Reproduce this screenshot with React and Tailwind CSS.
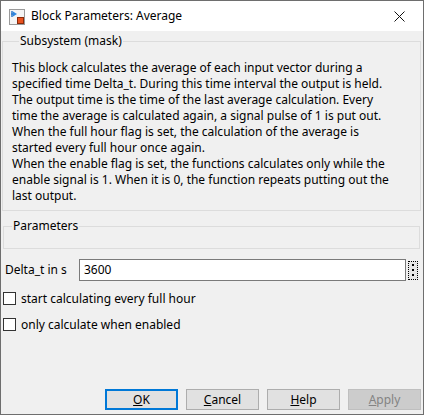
import React from 'react';

const lines = [
  'This block calculates the average of each input vector during a',
  'specified time Delta_t. During this time interval the output is held.',
  'The output time is the time of the last average calculation. Every',
  'time the average is calculated again, a signal pulse of 1 is put out.',
  'When the full hour flag is set, the calculation of the average is',
  'started every full hour once again.',
  'When the enable flag is set, the functions calculates only while the',
  'enable signal is 1. When it is 0, the function repeats putting out the',
  'last output.',
];

function BlockIcon() {
  return (
    <svg width="16" height="16" viewBox="0 0 16 16">
      <rect x="0.5" y="0.5" width="15" height="15" fill="#f4f4f4" stroke="#9a9a9a" />
      <path d="M3 2 L3 8" stroke="#1e6fc8" strokeWidth="1.4" />
      <path d="M4 2.5 L8 5 L4 7.5 Z" fill="#2f86de" />
      <path d="M2 5 L4 5" stroke="#1e6fc8" strokeWidth="1" />
      <rect x="8.5" y="8.5" width="6" height="6" fill="#e8521f" stroke="#8a2a0a" />
    </svg>
  );
}

function Checkbox({ label }) {
  return (
    <div className="flex items-center h-[13px]">
      <span className="w-[13px] h-[13px] border border-[#333333] bg-white" />
      <span className="ml-[5px] leading-[16px]">{label}</span>
    </div>
  );
}

function DialogButton({ children, primary, disabled }) {
  return (
    <button
      className={
        primary
          ? 'w-[73px] h-[21px] bg-[#e1e1e1] border-2 border-[#0078d7] text-black'
          : disabled
          ? 'w-[73px] h-[21px] bg-[#cccccc] border border-[#bfbfbf] text-[#838383]'
          : 'w-[73px] h-[21px] bg-[#e1e1e1] border border-[#adadad] text-black'
      }
    >
      {children}
    </button>
  );
}

export default function App() {
  return (
    <div
      className="w-[424px] h-[415px] border border-[#6e6e6e] bg-[#f0f0f0] flex flex-col text-[12px] text-black overflow-hidden"
      style={{ fontFamily: '"Noto Sans", "Open Sans", sans-serif' }}
    >
      {/* Title bar */}
      <div className="h-[30px] bg-white flex items-center shrink-0">
        <div className="ml-[8px] mt-[1px]">
          <BlockIcon />
        </div>
        <span className="ml-[6px] leading-[16px]">Block Parameters: Average</span>
        <svg className="ml-auto mr-[18px]" width="11" height="11" viewBox="0 0 11 11">
          <path d="M0.5 0.5 L10.5 10.5 M10.5 0.5 L0.5 10.5" stroke="#111" strokeWidth="1" />
        </svg>
      </div>

      {/* Description group */}
      <fieldset className="mt-[2px] ml-[1px] mr-[2px] border border-[#dcdcdc] pl-[9px] pr-[4px] pt-[11px] pb-[6px]">
        <legend className="ml-[7px] px-[1px] leading-[16px]">Subsystem (mask)</legend>
        <div className="leading-[16px] whitespace-nowrap">
          {lines.map((l, i) => (
            <div key={i}>{l}</div>
          ))}
        </div>
      </fieldset>

      {/* Parameters group */}
      <fieldset className="mt-[7px] ml-[2px] mr-[3px] border border-[#dcdcdc] pb-[14px]">
        <legend className="ml-[8px] px-[1px] leading-[16px]">Parameters</legend>
      </fieldset>

      <div className="flex items-center mt-[10px] pl-[4px]">
        <span className="w-[74px] leading-[16px]">Delta_t in s</span>
        <div className="w-[327px] h-[22px] border border-[#7a7a7a] bg-white flex items-center pl-[4px]">
          3600
        </div>
        <div className="ml-[2px] w-[10px] h-[19px] border border-dotted border-black bg-[#e6e6e6] flex flex-col items-center justify-center gap-[3px]">
          <span className="w-[2px] h-[2px] bg-black" />
          <span className="w-[2px] h-[2px] bg-black" />
          <span className="w-[2px] h-[2px] bg-black" />
        </div>
      </div>

      <div className="mt-[11px] pl-[2px] flex flex-col gap-[13px]">
        <Checkbox label="start calculating every full hour" />
        <Checkbox label="only calculate when enabled" />
      </div>

      <div className="mt-auto mb-[4px] flex justify-end gap-[8px] pr-[2px]">
        <DialogButton primary>
          <u>O</u>K
        </DialogButton>
        <DialogButton>
          <u>C</u>ancel
        </DialogButton>
        <DialogButton>
          <u>H</u>elp
        </DialogButton>
        <DialogButton disabled>
          <u>A</u>pply
        </DialogButton>
      </div>
    </div>
  );
}
